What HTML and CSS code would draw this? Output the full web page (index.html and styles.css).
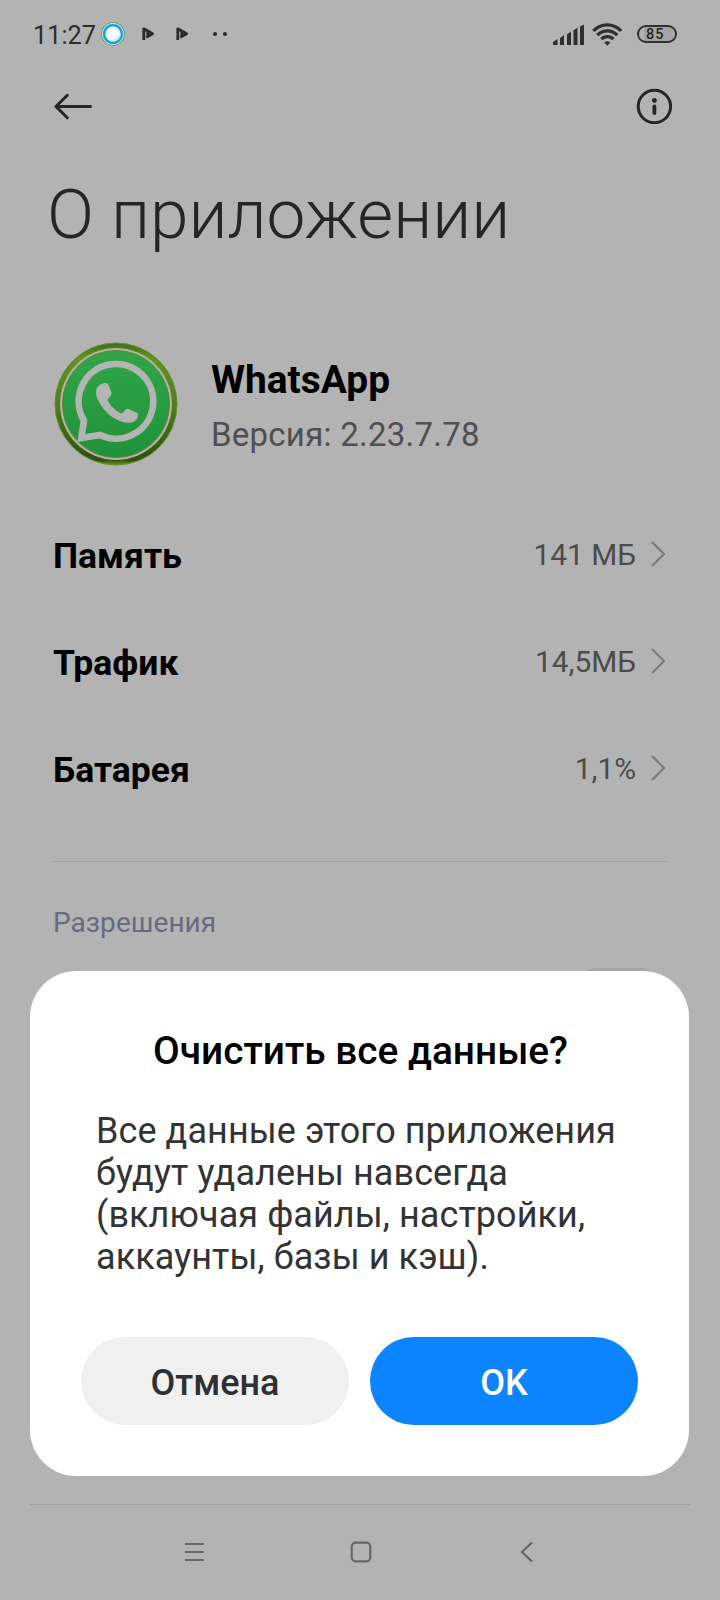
FILE: index.html
```html
<!DOCTYPE html>
<html lang="ru">
<head>
<meta charset="utf-8">
<title>О приложении</title>
<link rel="stylesheet" href="styles.css">
</head>
<body>
<div class="screen">
  <header class="status">
    <span class="time">11:27</span>
    <svg class="notices" width="136" height="28" viewBox="98 20 136 28">
      <circle cx="113" cy="34" r="11.800" fill="#55983b"/>
      <circle cx="113" cy="34" r="11" fill="#e8f5f0"/>
      <circle cx="113" cy="34" r="10.300" fill="#20a0e4"/>
      <circle cx="113" cy="34" r="7.600" fill="#f7fcff"/>
      <path d="M120.400 32.500A7.600 7.600 0 0 1 109 40.400Q117 39 120.400 32.500Z" fill="#cfe8fb"/>
      <g fill="none" stroke="#2b2b2b" stroke-width="2.800" stroke-linejoin="round">
        <path d="M143.800 40V28.800L152.600 33.800L146.300 37.300M147.800 32V36"/>
        <path d="M177.800 40V28.800L186.600 33.800L180.300 37.300M181.800 32V36"/>
      </g>
      <circle cx="215" cy="34" r="2.100" fill="#2b2b2b"/>
      <circle cx="225" cy="34" r="2.100" fill="#2b2b2b"/>
    </svg>
    <svg class="signals" width="72" height="28" viewBox="552 20 72 28">
      <path fill="#2f2f2f" d="M553 45v-3l4.500-3v6zM560 45v-7l4-3v10zM567 45V34.500l4-3V45zM573.500 45V30.500l4-3V45zM580 45V26.500l4-2V45z"/>
      <g fill="none" stroke="#2f2f2f" stroke-width="3.200">
        <path d="M593.300 31a19 19 0 0 1 27.900 0"/>
        <path d="M597.300 35.200a13.500 13.500 0 0 1 19.900 0"/>
        <path d="M601.300 39.200a8.300 8.300 0 0 1 12.100 0"/>
      </g>
      <path d="M604.200 42.300q3.100-2.300 6.200 0l-3.100 3.500z" fill="#2f2f2f"/>
    </svg>
    <span class="battery">85</span>
  </header>

  <nav class="toolbar">
    <svg width="40" height="28" viewBox="53 92 40 28" fill="none" stroke="#252525" stroke-width="3" stroke-linecap="round" stroke-linejoin="round"><path d="M90.500 106.500H56M67.300 95.300L56 106.500L67.300 117.700"/></svg>
    <svg width="36" height="36" viewBox="0 0 36 36"><circle cx="18.400" cy="18.500" r="16.200" fill="none" stroke="#252525" stroke-width="3"/><circle cx="18.400" cy="12.500" r="2.400" fill="#252525"/><path d="M18.400 18.500v6.500" stroke="#252525" stroke-width="3.800" stroke-linecap="round"/></svg>
  </nav>

  <h1 class="heading">О приложении</h1>

  <section class="app">
    <svg class="logo" width="124" height="124" viewBox="0 0 124 124">
      <defs>
        <linearGradient id="ring" x1="0" y1="0" x2="0" y2="1"><stop offset="0" stop-color="#416a1b"/><stop offset=".12" stop-color="#629322"/><stop offset=".55" stop-color="#4e791f"/><stop offset=".96" stop-color="#304e10"/><stop offset="1" stop-color="#659d24"/></linearGradient>
        <linearGradient id="face" x1="0" y1="0" x2="0" y2="1"><stop offset="0" stop-color="#31a548"/><stop offset="1" stop-color="#20933a"/></linearGradient>
      </defs>
      <circle cx="62" cy="62" r="61" fill="url(#ring)" stroke="#5c8d22" stroke-width="1"/>
      <circle cx="62" cy="62" r="56" fill="#aeb69a"/>
      <circle cx="62" cy="62" r="53.500" fill="url(#face)" stroke="#667a45" stroke-width="1"/>
      <path d="M27.300 96L30 78.500A37.300 37.300 0 1 1 46 93Z" fill="none" stroke="#b4b4b4" stroke-width="6.600"/>
      <path d="M45 43.500C48 41 53 39.500 54.500 43L57.500 50.500C58.500 53 54 56 53.500 58C56 63.500 61 68.500 67 71.500C69 72 71.500 66.500 73.800 66.800L82.500 70.500C85.500 72 83.500 77.500 80.500 79.300C74.500 82.500 67 80 61 76.500C54 73 47.500 65.500 44 58C41.500 52.500 41 47 45 43.500Z" fill="#b4b4b4"/>
    </svg>
    <div class="about">
      <div class="name">WhatsApp</div>
      <div class="version">Версия: 2.23.7.78</div>
    </div>
  </section>

  <ul class="rows">
    <li class="row"><span class="label">Память</span><span class="value">141 МБ</span><svg class="chevron" width="16" height="28" viewBox="0 0 16 28"><path d="M2 2L14 14L2 26"/></svg></li>
    <li class="row"><span class="label">Трафик</span><span class="value">14,5МБ</span><svg class="chevron" width="16" height="28" viewBox="0 0 16 28"><path d="M2 2L14 14L2 26"/></svg></li>
    <li class="row"><span class="label">Батарея</span><span class="value">1,1%</span><svg class="chevron" width="16" height="28" viewBox="0 0 16 28"><path d="M2 2L14 14L2 26"/></svg></li>
  </ul>

  <section class="permissions">
    <h2 class="caption">Разрешения</h2>
    <div class="toggle"></div>
  </section>

  <footer class="navbar">
    <svg width="22" height="22" viewBox="0.700 0 22 22"><path d="M1.500 3h19M1.500 11h19M1.500 19h19"/></svg>
    <svg width="22" height="22" viewBox="0 0 22 22"><rect x="1.700" y="1.700" width="18.600" height="18.600" rx="4"/></svg>
    <svg width="22" height="22" viewBox="0 0 22 22"><path d="M16 1.500L6 11L16 20.500"/></svg>
  </footer>

  <div class="dialog" role="dialog">
    <h2 class="dialog-title">Очистить все данные?</h2>
    <p class="message">Все данные этого приложения<br>будут удалены навсегда<br>(включая файлы, настройки,<br>аккаунты, базы и кэш).</p>
    <div class="actions">
      <button class="button cancel">Отмена</button>
      <button class="button ok">OK</button>
    </div>
  </div>
</div>
</body>
</html>
```
FILE: styles.css
```css
* { box-sizing: border-box; }
body { margin: 0; background: #b3b3b3; font-family: Roboto, "Noto Sans", sans-serif; }
svg { display: block; flex: none; }
h1, h2, p, ul { margin: 0; padding: 0; }

.screen { position: relative; width: 720px; height: 1600px; overflow: hidden; display: flex; flex-direction: column; background: #b3b3b3; }

.status { height: 68px; display: flex; align-items: center; padding: 0 43px 0 33px; }
.time { width: 65px; font-size: 25.3px; line-height: 30px; padding-top: 3px; color: #2d2d2d; white-space: nowrap; }
.signals { margin-left: auto; margin-right: 13px; }
.battery { width: 40px; height: 18px; border: 2px solid #303030; border-radius: 9px; background: linear-gradient(90deg, #b3b3b3 5px, #a5a5a5 5px, #a5a5a5 34px, #b3b3b3 34px); font-size: 14.5px; line-height: 16px; font-weight: 500; letter-spacing: 1px; padding-left: 7px; color: #252525; }

.toolbar { height: 76px; display: flex; justify-content: space-between; align-items: center; padding: 0 48px 0 53px; }

.heading { height: 140px; padding-left: 47px; font-size: 69.4px; line-height: 141px; font-weight: 300; color: #252525; white-space: nowrap; }

.app { display: flex; gap: 34px; padding: 60px 53px 0; height: 218px; margin-top: -2px; }
.logo { margin-left: .5px; margin-right: -.5px; }
.about { padding-top: 14px; }
.name { font-size: 38.9px; line-height: 48px; font-weight: 700; color: #000; }
.version { margin-top: 7px; font-size: 33px; line-height: 48px; color: #4f4f4f; letter-spacing: .25px; white-space: nowrap; }

.rows { list-style: none; margin: 2px 53px 0; height: 360px; border-bottom: 1px solid #a0a0a0; }
.row { height: 107px; display: flex; align-items: center; }
.label { flex: 1; font-size: 35.5px; font-weight: 700; color: #000; padding-top: 1px; }
.value { font-size: 29.8px; color: #4b4b4b; margin-right: 14px; padding-bottom: 2px; }
.chevron { margin: -4px 1px 0 0; }
.chevron path { fill: none; stroke: #7d7d7d; stroke-width: 2.2; }

.permissions { padding: 41px 53px 0; }
.caption { font-size: 28px; line-height: 40px; font-weight: 400; letter-spacing: .05px; color: #686b80; }
.toggle { width: 88px; height: 46px; border-radius: 23px; margin: 25px 5px 0 auto; background: #a5a5a5; }

.navbar { margin: auto 30px 0; height: 96px; padding: 0 0 2px 1px; border-top: 1px solid #a0a0a0; display: flex; justify-content: center; align-items: center; gap: 144px; }
.navbar svg { fill: none; stroke: #666; stroke-width: 2.2; }

.dialog { position: absolute; left: 30px; top: 971px; width: 659px; height: 505px; padding: 56px 51px 0; border-radius: 46px; background: #fff; }
.dialog-title { padding-left: 2px; font-size: 38.8px; line-height: 48px; font-weight: 500; text-align: center; color: #000; white-space: nowrap; }
.message { margin: 35px -10px 0 15px; font-size: 36px; line-height: 42px; color: #333; letter-spacing: .08px; white-space: nowrap; }
.actions { display: flex; gap: 21px; margin-top: 59px; }
.button { width: 268px; height: 88px; border: 0; border-radius: 44px; padding: 4px 0 0; font: 500 36px/42px Roboto, "Noto Sans", sans-serif; }
.cancel { background: #f0f0f0; color: #303030; }
.ok { background: #0d84ff; color: #fff; }
```
